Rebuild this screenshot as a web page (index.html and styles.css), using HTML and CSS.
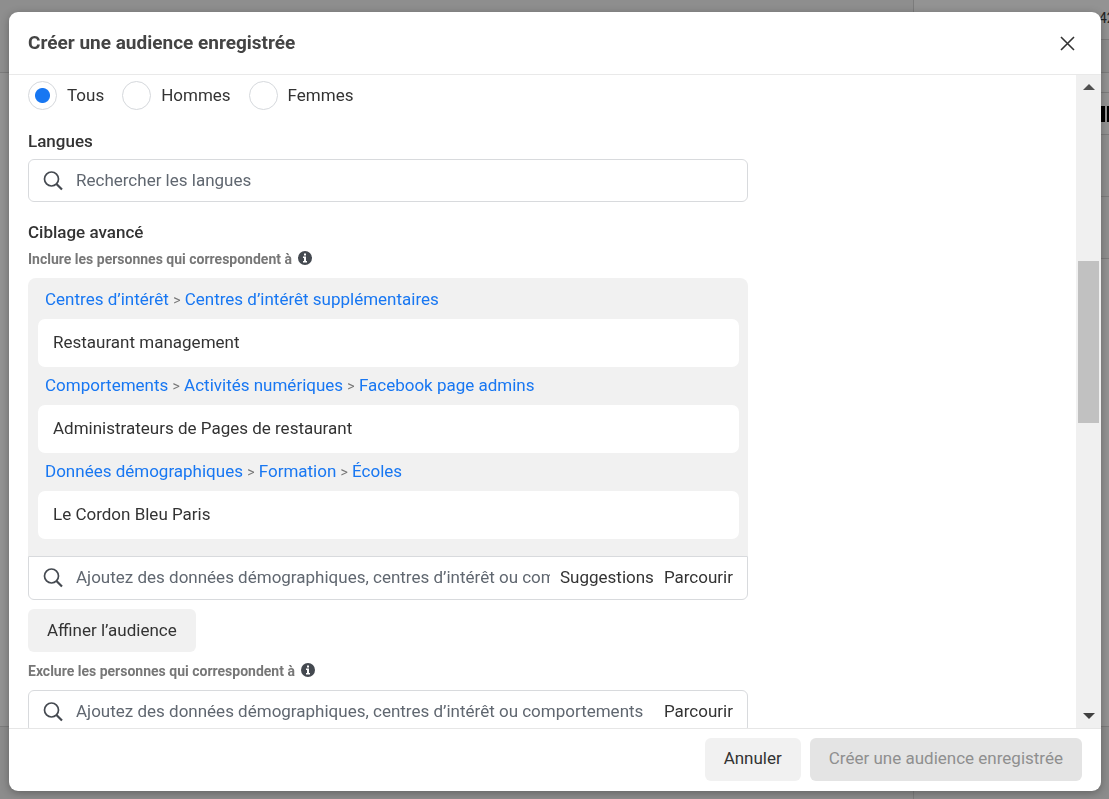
FILE: index.html
```html
<!DOCTYPE html>
<html lang="fr">
<head>
    <meta charset="utf-8">
    <title>Créer une audience enregistrée</title>
    <link rel="stylesheet" href="styles.css">
</head>
<body>
    <!-- Page behind the dialog -->
    <div class="page" aria-hidden="true">
        <div class="page-main">
            <div class="page-toolbar"></div>
            <div class="page-content"></div>
            <div class="page-bottom"></div>
        </div>
        <div class="page-side">
            <div class="side-row side-total">42</div>
            <div class="side-row side-head"></div>
            <div class="side-row side-filter"></div>
            <div class="side-row side-code"><span class="bars"></span></div>
            <div class="side-row side-item"></div>
            <div class="side-row side-item"></div>
            <div class="side-row side-rest"></div>
            <div class="page-bottom"></div>
        </div>
    </div>

    <div class="modal" role="dialog" aria-labelledby="modalTitle">
        <div class="modal-header">
            <h1 id="modalTitle">Créer une audience enregistrée</h1>
            <button type="button" class="close" aria-label="Fermer">
                <svg width="15" height="15" viewBox="0 0 15 15"><path d="M1 1L14 14M14 1L1 14" fill="none" stroke="#333" stroke-width="1.6"/></svg>
            </button>
        </div>

        <div class="modal-body">
            <form class="content" id="audienceForm">
                <div class="genders">
                    <label><input type="radio" name="gender" value="all" checked><span>Tous</span></label>
                    <label><input type="radio" name="gender" value="men"><span>Hommes</span></label>
                    <label><input type="radio" name="gender" value="women"><span>Femmes</span></label>
                </div>

                <label class="title" for="languages">Langues</label>
                <div class="search">
                    <svg class="icon-search" width="20" height="20" viewBox="0 0 20 20"><circle cx="8.500" cy="8" r="7" fill="none" stroke="#444950" stroke-width="1.700"/><path d="M13.500 13L19 18.500" fill="none" stroke="#444950" stroke-width="2.200"/></svg>
                    <input type="text" id="languages" placeholder="Rechercher les langues">
                </div>

                <h2 class="title targeting">Ciblage avancé</h2>
                <div class="subtitle">
                    <label for="include">Inclure les personnes qui correspondent à</label>
                    <svg class="icon-info" width="14" height="14" viewBox="0 0 14 14"><circle cx="7" cy="7" r="7" fill="#444950"/><path d="M6 2.5h2v2H6zM5 5.5h3v4.500h1V11.500H5V10h1V7H5z" fill="#fff"/></svg>
                </div>

                <div class="panel">
                    <div class="crumbs"><a href="#">Centres d’intérêt</a> <span>&gt;</span> <a href="#">Centres d’intérêt supplémentaires</a></div>
                    <div class="item">Restaurant management</div>
                    <div class="crumbs"><a href="#">Comportements</a> <span>&gt;</span> <a href="#">Activités numériques</a> <span>&gt;</span> <a href="#">Facebook page admins</a></div>
                    <div class="item">Administrateurs de Pages de restaurant</div>
                    <div class="crumbs"><a href="#">Données démographiques</a> <span>&gt;</span> <a href="#">Formation</a> <span>&gt;</span> <a href="#">Écoles</a></div>
                    <div class="item">Le Cordon Bleu Paris</div>
                </div>
                <div class="search search-attached">
                    <svg class="icon-search" width="20" height="20" viewBox="0 0 20 20"><circle cx="8.500" cy="8" r="7" fill="none" stroke="#444950" stroke-width="1.700"/><path d="M13.500 13L19 18.500" fill="none" stroke="#444950" stroke-width="2.200"/></svg>
                    <input type="text" id="include" placeholder="Ajoutez des données démographiques, centres d’intérêt ou comportements">
                    <button type="button" class="link">Suggestions</button>
                    <button type="button" class="link">Parcourir</button>
                </div>

                <button type="button" class="btn narrow">Affiner l’audience</button>

                <div class="subtitle">
                    <label for="exclude">Exclure les personnes qui correspondent à</label>
                    <svg class="icon-info" width="14" height="14" viewBox="0 0 14 14"><circle cx="7" cy="7" r="7" fill="#444950"/><path d="M6 2.5h2v2H6zM5 5.5h3v4.500h1V11.500H5V10h1V7H5z" fill="#fff"/></svg>
                </div>
                <div class="search">
                    <svg class="icon-search" width="20" height="20" viewBox="0 0 20 20"><circle cx="8.500" cy="8" r="7" fill="none" stroke="#444950" stroke-width="1.700"/><path d="M13.500 13L19 18.500" fill="none" stroke="#444950" stroke-width="2.200"/></svg>
                    <input type="text" id="exclude" placeholder="Ajoutez des données démographiques, centres d’intérêt ou comportements">
                    <button type="button" class="link">Parcourir</button>
                </div>
            </form>

            <div class="scrollbar">
                <svg width="12" height="6" viewBox="0 0 12 6"><path d="M0 6L6 0L12 6z" fill="#505050"/></svg>
                <div class="track"><div class="thumb"></div></div>
                <svg width="12" height="6" viewBox="0 0 12 6"><path d="M0 0L6 6L12 0z" fill="#404040"/></svg>
            </div>
        </div>

        <div class="modal-footer">
            <button type="button" class="btn">Annuler</button>
            <button type="submit" form="audienceForm" class="btn" disabled>Créer une audience enregistrée</button>
        </div>
    </div>
</body>
</html>
```
FILE: styles.css
```css
* {
    box-sizing: border-box;
}

body {
    margin: 0;
    height: 100vh;
    overflow: hidden;
    font-family: Roboto, "Liberation Sans", sans-serif;
    font-size: 17px;
    line-height: 24px;
    color: #333;
}

button,
input {
    font: inherit;
    color: inherit;
}

button {
    border: none;
    background: none;
    padding: 0;
    cursor: pointer;
    white-space: nowrap;
}

/* Page behind the dialog */
.page {
    display: flex;
    height: 100%;
    background-color: #939393;
}

.page-main,
.page-side {
    display: flex;
    flex-direction: column;
}

.page-main {
    flex: 1;
    border-right: 1px solid #7c7c7c;
}

.page-side {
    width: 195px;
}

.page-toolbar {
    height: 73px;
    background-color: #8e8e8e;
    border-bottom: 1px solid #7c7c7c;
}

.page-content,
.side-rest {
    flex: 1;
}

.page-bottom {
    height: 73px;
    border-top: 1px solid #7c7c7c;
    background-color: #8c8c8c;
}

.side-row {
    border-bottom: 1px solid #7c7c7c;
}

.side-total {
    height: 40px;
    padding-top: 6px;
    padding-left: 185px;
    font-size: 14px;
    color: #222;
}

.side-head {
    height: 33px;
    background-color: #8c8c8c;
}

.side-filter {
    height: 20px;
}

.side-code {
    display: flex;
    align-items: center;
    justify-content: flex-end;
    height: 42px;
}

.bars {
    width: 8px;
    height: 16px;
    background: linear-gradient(90deg, #000 4px, #939393 4px, #939393 6px, #000 6px);
}

.side-item {
    height: 62px;
    background-color: #8f8f8f;
}

.side-rest {
    border-bottom: none;
}

/* Dialog */
.modal {
    position: fixed;
    top: 12px;
    right: 8px;
    bottom: 8px;
    left: 9px;
    display: flex;
    flex-direction: column;
    overflow: hidden;
    background-color: #fff;
    border-radius: 9px;
    box-shadow: 0 2px 8px rgba(0, 0, 0, 0.3);
}

.modal-header {
    display: flex;
    align-items: center;
    justify-content: space-between;
    height: 63px;
    padding: 0 26px 0 19px;
    border-bottom: 1px solid #e9e9e9;
}

h1 {
    margin: 0;
    font-size: 19px;
    font-weight: 700;
    color: #444;
}

.close {
    display: flex;
}

.modal-body {
    flex: 1;
    display: flex;
    min-height: 0;
}

.content {
    flex: 1;
    overflow: hidden;
    padding: 6px 19px;
}

.content > * {
    max-width: 720px;
}

.genders {
    display: flex;
    gap: 18px;
    margin-bottom: 19px;
}

.genders label {
    display: flex;
    align-items: center;
    gap: 10px;
}

.genders span {
    padding-bottom: 2px;
}

.genders input {
    appearance: none;
    width: 29px;
    height: 29px;
    margin: 0;
    border: 1px solid #d5d8dc;
    border-radius: 50%;
}

.genders input:checked {
    background: radial-gradient(circle, #1877f2 7px, #fff 8px);
}

.title {
    display: block;
    margin: 0 0 6px;
    font-size: 17px;
    font-weight: 500;
}

.targeting {
    margin-top: 18px;
}

.search {
    display: flex;
    align-items: center;
    gap: 10px;
    height: 43px;
    padding: 0 14px;
    border: 1px solid #d8dadd;
    border-radius: 6px;
}

.search input {
    flex: 1;
    min-width: 0;
    padding: 0 0 2px;
    border: none;
    outline: none;
    background: none;
}

.search input::placeholder {
    color: #606770;
    opacity: 1;
}

.link {
    padding-bottom: 2px;
}

.icon-search {
    flex: none;
    margin-right: 3px;
}

.search-attached {
    height: 44px;
    border-radius: 0 0 6px 6px;
}

.subtitle {
    display: flex;
    align-items: center;
    gap: 6px;
    margin-bottom: 10px;
    font-size: 14px;
    font-weight: 700;
    line-height: 18px;
    color: #777;
}

.icon-info {
    margin-bottom: 2px;
}

.panel {
    padding: 3px 9px 17px 10px;
    background-color: #f1f1f1;
    border-radius: 8px 8px 0 0;
}

.crumbs {
    padding: 6px 7px 8px;
}

.crumbs a {
    color: #1877f2;
    text-decoration: none;
}

.crumbs a:hover {
    text-decoration: underline;
}

.crumbs span {
    font-size: 14px;
    line-height: 14px;
    color: #777;
}

.item {
    padding: 11px 15px 13px;
    background-color: #fff;
    border-radius: 7px;
}

.btn {
    height: 43px;
    padding: 0 19px 2px;
    background-color: #f1f1f1;
    border-radius: 6px;
}

.btn:disabled {
    background-color: #e4e4e4;
    color: #8f8f8f;
    cursor: default;
}

.narrow {
    display: block;
    margin: 9px 0 10px;
}

.scrollbar {
    display: flex;
    flex-direction: column;
    align-items: center;
    width: 25px;
    padding: 9px 0;
    background-color: #f0f0f0;
}

.track {
    flex: 1;
    align-self: stretch;
    display: flex;
    flex-direction: column;
    padding: 0 2px;
}

/* The form is scrolled about a quarter of the way down */
.thumb {
    height: 26%;
    margin-top: 171px;
    background-color: #c1c1c1;
}

.modal-footer {
    display: flex;
    align-items: center;
    justify-content: flex-end;
    gap: 9px;
    height: 63px;
    padding: 0 19px 2px;
    border-top: 1px solid #e6e6e6;
}
```
